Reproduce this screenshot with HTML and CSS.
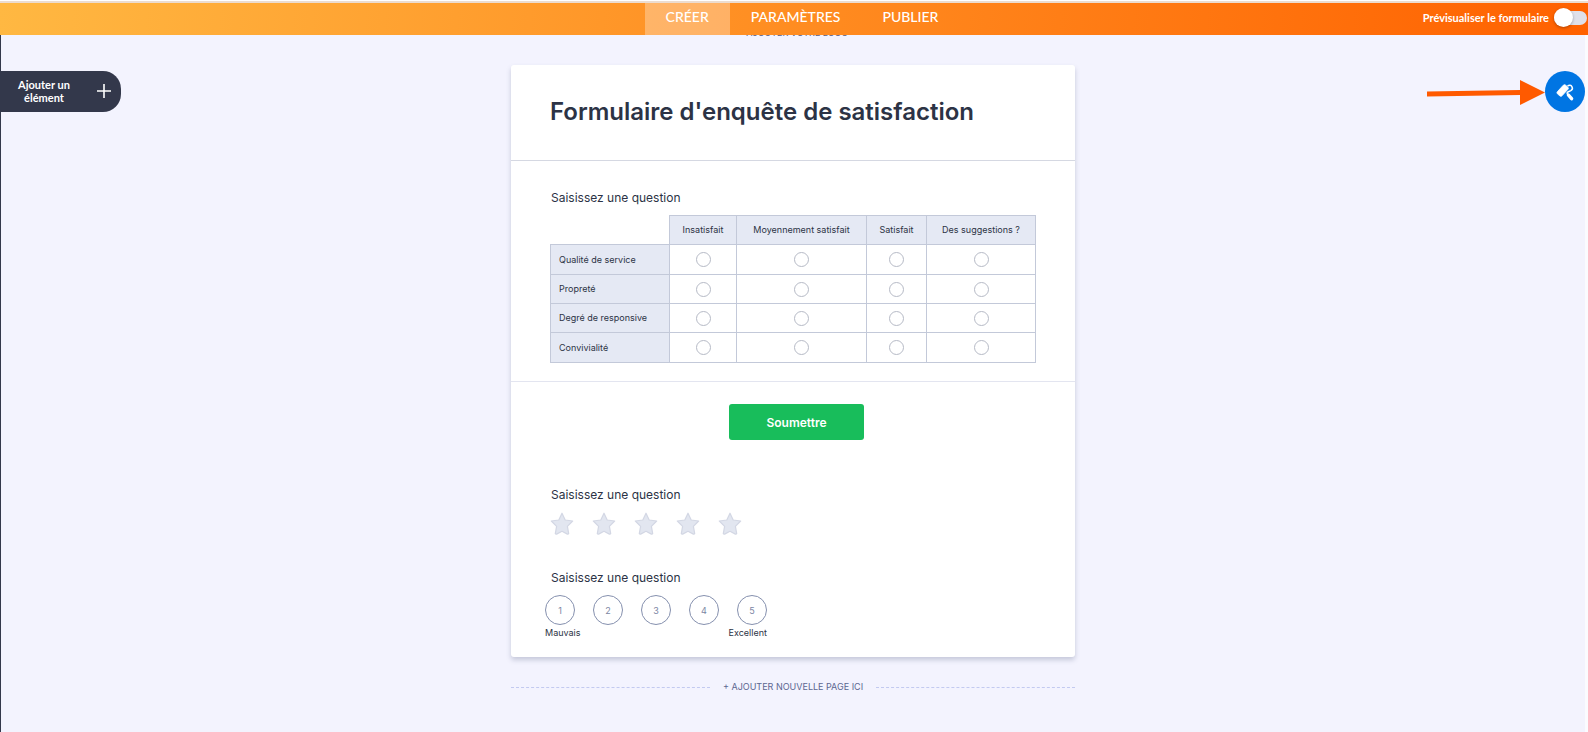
FILE: index.html
```html
<!DOCTYPE html>
<html lang="fr">
<head>
<meta charset="utf-8">
<title>Formulaire d'enquête de satisfaction</title>
<link rel="stylesheet" href="styles.css">
</head>
<body>
<header class="topbar">
  <nav class="tabs">
    <a class="tab tab-active" href="#creer">CRÉER</a>
    <a class="tab" href="#parametres">PARAMÈTRES</a>
    <a class="tab" href="#publier">PUBLIER</a>
  </nav>
  <label class="preview">
    <span>Prévisualiser le formulaire</span>
    <input class="switch" type="checkbox">
  </label>
</header>
<div class="workspace">
  <button class="add-element" type="button">
    <span class="add-label">Ajouter un élément</span>
    <svg width="14" height="14" viewBox="0 0 14 14" aria-hidden="true"><path d="M7 0v14M0 7h14" stroke="#fff" stroke-width="1.6"/></svg>
  </button>
  <main class="builder">
    <a class="add-logo" href="#logo">+ AJOUTER VOTRE LOGO</a>
    <form class="card">
      <div class="card-head"><h1>Formulaire d'enquête de satisfaction</h1></div>
      <section class="matrix">
        <h2 class="question">Saisissez une question</h2>
        <table>
          <colgroup><col class="c-label"><col class="c1"><col class="c2"><col class="c3"><col class="c4"></colgroup>
          <thead><tr><td></td><th scope="col">Insatisfait</th><th scope="col">Moyennement satisfait</th><th scope="col">Satisfait</th><th scope="col">Des suggestions ?</th></tr></thead>
          <tbody>
            <tr><th scope="row">Qualité de service</th><td><input type="radio" name="r1" aria-label="Insatisfait"></td><td><input type="radio" name="r1" aria-label="Moyennement satisfait"></td><td><input type="radio" name="r1" aria-label="Satisfait"></td><td><input type="radio" name="r1" aria-label="Des suggestions ?"></td></tr>
            <tr><th scope="row">Propreté</th><td><input type="radio" name="r2" aria-label="Insatisfait"></td><td><input type="radio" name="r2" aria-label="Moyennement satisfait"></td><td><input type="radio" name="r2" aria-label="Satisfait"></td><td><input type="radio" name="r2" aria-label="Des suggestions ?"></td></tr>
            <tr><th scope="row">Degré de responsive</th><td><input type="radio" name="r3" aria-label="Insatisfait"></td><td><input type="radio" name="r3" aria-label="Moyennement satisfait"></td><td><input type="radio" name="r3" aria-label="Satisfait"></td><td><input type="radio" name="r3" aria-label="Des suggestions ?"></td></tr>
            <tr><th scope="row">Convivialité</th><td><input type="radio" name="r4" aria-label="Insatisfait"></td><td><input type="radio" name="r4" aria-label="Moyennement satisfait"></td><td><input type="radio" name="r4" aria-label="Satisfait"></td><td><input type="radio" name="r4" aria-label="Des suggestions ?"></td></tr>
          </tbody>
        </table>
      </section>
      <div class="submit-row"><button class="submit" type="submit">Soumettre</button></div>
      <section class="stars-block">
        <h2 class="question">Saisissez une question</h2>
        <svg class="defs" aria-hidden="true"><symbol id="star" viewBox="0 0 24 24"><path d="M12 1.2l3.200 6.800 7.500 1-5.300 5.400 1.300 7.300c-.4.500-.8.600-1.300.4L12 19.300l-5.400 2.800c-.5.200-.9.100-1.300-.4l1.300-7.300L1.300 9l7.500-1z" fill="#e2e6f0" stroke="#d3d7e4" stroke-width="1.200" stroke-linejoin="round"/></symbol></svg>
        <div class="stars">
          <button type="button" aria-label="1 étoile"><svg><use href="#star"/></svg></button>
          <button type="button" aria-label="2 étoiles"><svg><use href="#star"/></svg></button>
          <button type="button" aria-label="3 étoiles"><svg><use href="#star"/></svg></button>
          <button type="button" aria-label="4 étoiles"><svg><use href="#star"/></svg></button>
          <button type="button" aria-label="5 étoiles"><svg><use href="#star"/></svg></button>
        </div>
      </section>
      <section class="scale-block">
        <h2 class="question">Saisissez une question</h2>
        <div class="scale-wrap">
          <div class="scale">
            <button type="button">1</button><button type="button">2</button><button type="button">3</button><button type="button">4</button><button type="button">5</button>
          </div>
          <div class="scale-ends"><span>Mauvais</span><span>Excellent</span></div>
        </div>
      </section>
    </form>
    <a class="add-page" href="#page">+ AJOUTER NOUVELLE PAGE ICI</a>
  </main>
  <svg class="arrow" width="118" height="26" viewBox="0 0 118 26" aria-hidden="true"><path d="M0 11.500L93 10V0l25 12.500L93 25V15L0 16.500z" fill="#ff5a00"/></svg>
  <button class="designer" type="button" aria-label="Concepteur de formulaire">
    <svg width="20" height="20" viewBox="0 0 20 20" aria-hidden="true"><path d="M2.300 9.800L8.300 3.200q1-1 2.100-.2l2.500 2.200q1 1 .1 2L7 13.800q-1 1-2 .2L2.400 11.800q-1-1-.1-2z" fill="#fff" stroke="#fff" stroke-width=".8"/><path d="M12.500 4q3-1.800 4.500.8 1.300 2.400-1.200 3.800l-3 1.400q-1.200.8-.3 2" fill="none" stroke="#fff" stroke-width="1.500"/><path d="M13.400 13l3.200 3.700" stroke="#fff" stroke-width="3.400" stroke-linecap="round"/></svg>
  </button>
</div>
</body>
</html>
```
FILE: styles.css
```css
* { box-sizing: border-box; }
body { margin: 0; min-height: 100vh; display: flex; flex-direction: column; font-family: Inter, "Liberation Sans", sans-serif; color: #2c3345; background: #f3f3fe; }
button { font: inherit; border: 0; padding: 0; background: none; cursor: pointer; }
a { text-decoration: none; }
h1, h2 { margin: 0; }

.topbar { position: relative; z-index: 2; height: 35px; padding-top: 3px; display: grid; grid-template-columns: 1fr auto 1fr; background: linear-gradient(95deg, #ffb842, #ff6100) 0 3px no-repeat, linear-gradient(#fff 1px, #ecdccf 1px); }
.tabs { grid-column: 2; display: flex; padding-left: 16px; }
.tab { padding: 4px 21px; font: 500 14px/20px Lato, sans-serif; color: #fff; }
.tab-active { background: rgba(255, 255, 255, .3); }
.preview { display: flex; align-items: center; justify-content: flex-end; gap: 5px; height: 30px; font: 700 11px/14px Lato, sans-serif; color: #fff; }
.switch { appearance: none; position: relative; width: 33px; height: 14px; margin: 0 1px 0 0; border-radius: 7px; background: #dfe0ea; }
.switch::before { content: ""; position: absolute; left: 0; top: -3px; width: 19px; height: 19px; border-radius: 50%; background: #fff; box-shadow: 0 1px 3px rgba(0, 0, 0, .3); }

.workspace { flex: 1; position: relative; border-left: 1px solid #33384b; border-right: 3px solid #fbfbff; }
.add-element { position: absolute; left: -1px; top: 36px; width: 121px; height: 41px; padding: 0 10px 2px 14px; display: flex; align-items: center; justify-content: space-between; border-radius: 0 18px 18px 0; background: #33384b; color: #fff; }
.add-label { width: 60px; font: 700 11px/13px Lato, sans-serif; }
.designer { position: absolute; right: 0; top: 36px; width: 40px; height: 41px; display: grid; place-items: center; border-radius: 50%; background: #0075e3; }
.arrow { position: absolute; right: 40px; top: 45px; }

.builder { max-width: 564px; margin: 0 auto; padding-bottom: 32px; display: flex; flex-direction: column; }
.add-logo { align-self: center; margin: -7px 0 27px; font-size: 9px; line-height: 10px; color: #5b6080; }
.card { background: #fff; border-radius: 3px; box-shadow: 0 3px 5px rgba(84, 95, 125, .28); }
.card-head { padding: 30px 39px 32px; border-bottom: 1px solid #d5d8e2; }
h1 { font-size: 24px; line-height: 33px; font-weight: 600; }
.question { font-size: 12px; line-height: 16px; font-weight: 400; }
.matrix { padding: 29px 39px 18px; border-bottom: 1px solid #e3e5f0; }
.matrix .question { padding-left: 1px; }
table { width: 100%; max-width: 486px; margin-top: 9px; border-collapse: collapse; table-layout: fixed; font-size: 9px; line-height: 12px; }
.c-label { width: 119px; } .c1 { width: 67px; } .c2 { width: 130px; } .c3 { width: 60px; } .c4 { width: 109px; }
tr { height: 29px; }
tbody tr:first-child, tbody tr:last-child { height: 30px; }
th, tbody td { border: 1px solid #c3c9d9; padding: 0; text-align: center; }
th { background: #e5e9f4; font-weight: 400; }
tbody th { padding-left: 8px; text-align: left; }
tbody input { appearance: none; display: block; width: 15px; height: 15px; margin: 0 auto; border: 1px solid #b6bac6; border-radius: 50%; background: #fff; }
.submit-row { padding: 22px 0 0 7px; display: flex; justify-content: center; }
.submit { width: 135px; height: 36px; border-radius: 3px; background: #18bd5b; color: #fff; font-size: 12px; font-weight: 600; }
.stars-block { padding: 47px 39px 0; }
.stars-block .question { padding-left: 1px; }
.defs { display: none; }
.stars { display: flex; gap: 18px; margin-top: 9px; }
.stars button, .stars svg { display: block; width: 24px; height: 24px; }
.scale-block { padding: 34px 34px 18px; }
.scale-block .question { padding-left: 6px; }
.scale-wrap { width: 222px; margin-top: 9px; }
.scale { display: flex; justify-content: space-between; }
.scale button { width: 30px; height: 30px; border: 1px solid #8590ae; border-radius: 50%; font-size: 9px; color: #7b86a3; }
.scale-ends { display: flex; justify-content: space-between; font-size: 9px; line-height: 12px; margin-top: 2px; }
.add-page { display: flex; align-items: center; gap: 13px; margin-top: 24px; font-size: 9px; line-height: 12px; color: #5c6791; }
.add-page::before, .add-page::after { content: ""; flex: 1; border-top: 1px dashed #c3caf0; }
```
